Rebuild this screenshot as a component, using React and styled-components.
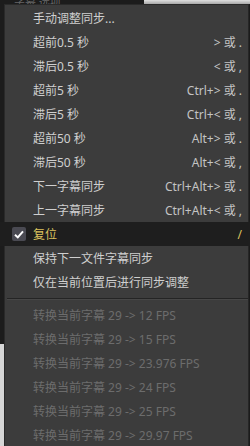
import React from "react";
import styled, { createGlobalStyle } from "styled-components";

const Global = createGlobalStyle`
  html, body {
    margin: 0;
    padding: 0;
    background: #1b1b1b;
  }
  body {
    font-family: "Noto Sans", "Noto Sans CJK SC", sans-serif;
  }
`;

const Screen = styled.div`
  width: 250px;
  height: 446px;
  display: grid;
  grid-template-columns: 4px 1fr;
  grid-template-rows: 4px 1fr;
  overflow: hidden;
`;

const TopStrip = styled.div`
  grid-column: 1 / 3;
  display: flex;
`;

const TopDark = styled.div`
  width: 144px;
  background: #1c1c1c;
  color: #666;
  font-size: 11px;
  line-height: 4px;
  padding-left: 14px;
  overflow: hidden;
  box-sizing: border-box;
`;

const TopLight = styled.div`
  flex: 1;
  background: linear-gradient(#e0e0e0, #a8a8a8);
`;

const SideStrip = styled.div`
  display: flex;
  flex-direction: column;
`;

const SideSeg = styled.div`
  height: ${(p) => p.h}px;
  flex: ${(p) => (p.h ? "none" : 1)};
  background: ${(p) => p.bg};
`;

const Menu = styled.div`
  background: #3c3c3c;
  border-left: 1px solid #2a2a2a;
  border-top: 1px solid #2a2a2a;
  border-right: 1px solid #262626;
  margin-right: 1px;
  padding-top: 1px;
  display: flex;
  flex-direction: column;
`;

const Row = styled.div`
  height: 24px;
  display: flex;
  align-items: center;
  padding: 0 6px 0 7px;
  font-size: 12px;
  background: ${(p) => (p.checked ? "#1e1e1e" : "transparent")};
  margin: ${(p) => (p.checked ? "0 -2px 0 -6px" : "0")};
  padding-left: ${(p) => (p.checked ? "13px" : "7px")};
  padding-right: ${(p) => (p.checked ? "8px" : "6px")};
  color: ${(p) => (p.checked ? "#dcc25e" : p.disabled ? "#6c6c6c" : "#cfcfcf")};
`;

const CheckCol = styled.div`
  width: 14px;
  height: 14px;
  margin-right: 7px;
  flex: none;
  border-radius: 2px;
  background: ${(p) => (p.on ? "#4a4a52" : "transparent")};
  display: flex;
  align-items: center;
  justify-content: center;
`;

const Label = styled.span`
  flex: 1;
  white-space: nowrap;
`;

const Shortcut = styled.span`
  white-space: nowrap;
  color: ${(p) => (p.gold ? "#dcc25e" : "#c4c4c4")};
`;

const Separator = styled.div`
  height: 9px;
  display: flex;
  align-items: center;
  padding-left: 2px;
  &::after {
    content: "";
    flex: 1;
    height: 1px;
    background: #242424;
    border-bottom: 1px solid #474747;
  }
`;

const Check = () => (
  <svg width="10" height="9" viewBox="0 0 10 9">
    <path d="M1 4.8 L3.8 7.4 L9 1.4" stroke="#fff" strokeWidth="2" fill="none" />
  </svg>
);

const items = [
  { label: "手动调整同步..." },
  { label: "超前0.5 秒", key: "> 或 ." },
  { label: "滞后0.5 秒", key: "< 或 ," },
  { label: "超前5 秒", key: "Ctrl+> 或 ." },
  { label: "滞后5 秒", key: "Ctrl+< 或 ," },
  { label: "超前50 秒", key: "Alt+> 或 ." },
  { label: "滞后50 秒", key: "Alt+< 或 ," },
  { label: "下一字幕同步", key: "Ctrl+Alt+> 或 ." },
  { label: "上一字幕同步", key: "Ctrl+Alt+< 或 ," },
  { label: "复位", key: "/", checked: true },
  { label: "保持下一文件字幕同步" },
  { label: "仅在当前位置后进行同步调整" },
];

const fps = ["12", "15", "23.976", "24", "25", "29.97"];

const App = () => {
  return (
    <>
      <Global />
      <Screen>
        <TopStrip>
          <TopDark>字幕 选项</TopDark>
          <TopLight />
        </TopStrip>
        <SideStrip>
          <SideSeg h={340} bg="#1c1c1c" />
          <SideSeg bg="#d6d6d6" />
        </SideStrip>
        <Menu>
          {items.map((it, i) => (
            <Row key={i} checked={it.checked}>
              <CheckCol on={it.checked}>{it.checked && <Check />}</CheckCol>
              <Label>{it.label}</Label>
              {it.key && <Shortcut gold={it.checked}>{it.key}</Shortcut>}
            </Row>
          ))}
          <Separator />
          {fps.map((f) => (
            <Row key={f} disabled>
              <CheckCol />
              <Label>转换当前字幕 29 -&gt; {f} FPS</Label>
            </Row>
          ))}
        </Menu>
      </Screen>
    </>
  );
};

export default App;
